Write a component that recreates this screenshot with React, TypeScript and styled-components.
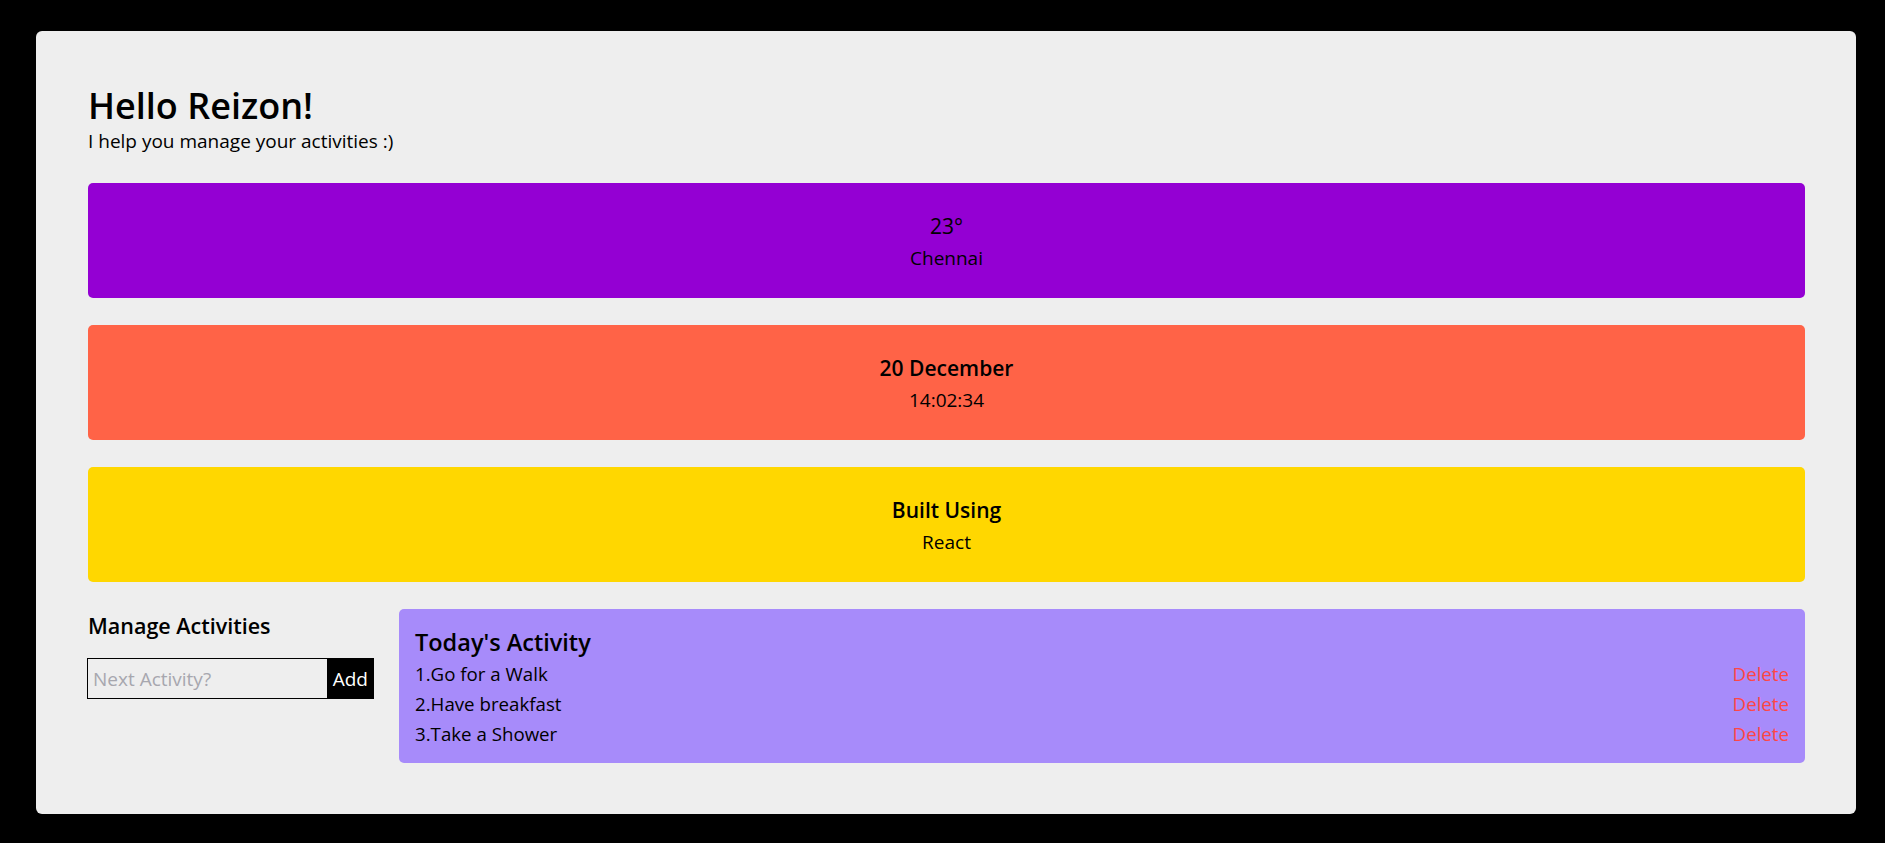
import styled, { createGlobalStyle } from "styled-components";

const GlobalStyle = createGlobalStyle`
  html, body {
    margin: 0;
    padding: 0;
    background: #000;
    font-family: "Open Sans", "Noto Sans", sans-serif;
    color: #000;
  }
`;

const Shell = styled.div`
  margin: 31px 29px 28px 36px;
  padding: 52px 51px 51px 52px;
  background: #eeeeee;
  border-radius: 6px;
`;

const Header = styled.header`
  margin-bottom: 30px;

  h1 {
    margin: 0;
    font-size: 36px;
    font-weight: 600;
    line-height: 46px;
  }

  p {
    margin: 0;
    font-size: 19px;
    line-height: 24px;
  }
`;

const Cards = styled.div`
  display: flex;
  flex-direction: column;
  gap: 27px;
`;

const InfoCard = styled.div<{ $bg: string }>`
  box-sizing: border-box;
  height: 115px;
  padding-top: 2px;
  background: ${(p) => p.$bg};
  border-radius: 5px;
  display: flex;
  flex-direction: column;
  align-items: center;
  justify-content: center;
`;

const CardTitle = styled.h3<{ $weight?: number }>`
  margin: 0;
  font-size: 21px;
  font-weight: ${(p) => p.$weight ?? 600};
  line-height: 32px;
`;

const CardText = styled.div`
  font-size: 19px;
  line-height: 32px;
`;

const Bottom = styled.section`
  margin-top: 27px;
  display: grid;
  grid-template-columns: 286px 1fr;
  gap: 25px;
  align-items: start;
`;

const Manage = styled.div`
  h3 {
    margin: 2px 0 17px;
    font-size: 21.5px;
    font-weight: 600;
    line-height: 30px;
  }
`;

const AddForm = styled.form`
  display: flex;
  box-sizing: border-box;
  height: 41px;
  margin-left: -1px;
  border: 1px solid #000;
`;

const ActivityInput = styled.input`
  flex: 1;
  min-width: 0;
  box-sizing: border-box;
  height: 100%;
  border: none;
  background: #eeeeee;
  padding: 0 5px;
  font-family: inherit;
  font-size: 19px;
  outline: none;

  &::placeholder {
    color: #a7a7ae;
  }
`;

const AddButton = styled.button`
  height: 100%;
  border: none;
  background: #000;
  color: #fff;
  padding: 0 5px 0 6px;
  font-family: inherit;
  font-size: 19px;
  cursor: pointer;
`;

const ActivityPanel = styled.div`
  background: #a78bfa;
  border-radius: 5px;
  padding: 16px 16px 14px;

  h2 {
    margin: 0;
    font-size: 23.5px;
    font-weight: 600;
    line-height: 34px;
  }
`;

const ActivityRow = styled.div`
  display: flex;
  justify-content: space-between;
  font-size: 18.7px;
  line-height: 30px;
`;

const DeleteLink = styled.span`
  color: #ff4545;
  cursor: pointer;
`;

const activities = ["Go for a Walk", "Have breakfast", "Take a Shower"];

export default function App() {
  return (
    <>
      <GlobalStyle />
      <Shell>
        <Header>
          <h1>Hello Reizon!</h1>
          <p>I help you manage your activities :)</p>
        </Header>

        <Cards>
          <InfoCard $bg="#9400d3">
            <CardTitle $weight={500}>23°</CardTitle>
            <CardText>Chennai</CardText>
          </InfoCard>
          <InfoCard $bg="#ff6347">
            <CardTitle>20 December</CardTitle>
            <CardText>14:02:34</CardText>
          </InfoCard>
          <InfoCard $bg="#ffd700">
            <CardTitle>Built Using</CardTitle>
            <CardText>React</CardText>
          </InfoCard>
        </Cards>

        <Bottom>
          <Manage>
            <h3>Manage Activities</h3>
            <AddForm onSubmit={(e) => e.preventDefault()}>
              <ActivityInput placeholder="Next Activity?" />
              <AddButton type="submit">Add</AddButton>
            </AddForm>
          </Manage>

          <ActivityPanel>
            <h2>Today's Activity</h2>
            {activities.map((a, i) => (
              <ActivityRow key={a}>
                <span>
                  {i + 1}.{a}
                </span>
                <DeleteLink>Delete</DeleteLink>
              </ActivityRow>
            ))}
          </ActivityPanel>
        </Bottom>
      </Shell>
    </>
  );
}
